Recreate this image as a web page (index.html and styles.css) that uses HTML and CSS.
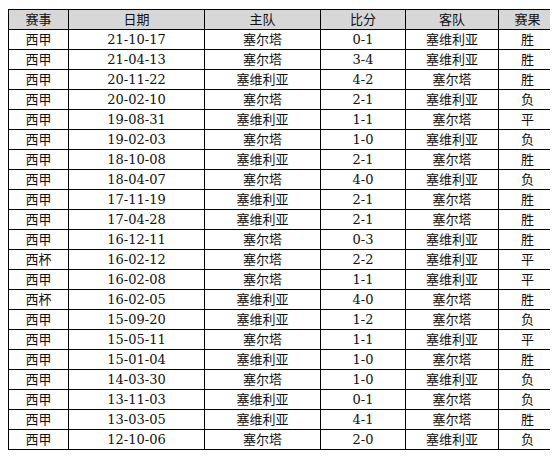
FILE: index.html
```html
<!DOCTYPE html>
<html lang="zh">
<head>
<meta charset="utf-8">
<link rel="stylesheet" href="styles.css">
</head>
<body>
<table class="records">
<colgroup>
<col class="c1"><col class="c2"><col class="c3"><col class="c4"><col class="c5"><col class="c6">
</colgroup>
<thead>
<tr><th>赛事</th><th>日期</th><th>主队</th><th>比分</th><th>客队</th><th>赛果</th></tr>
</thead>
<tbody>
<tr><td>西甲</td><td>21-10-17</td><td>塞尔塔</td><td>0-1</td><td>塞维利亚</td><td>胜</td></tr>
<tr><td>西甲</td><td>21-04-13</td><td>塞尔塔</td><td>3-4</td><td>塞维利亚</td><td>胜</td></tr>
<tr><td>西甲</td><td>20-11-22</td><td>塞维利亚</td><td>4-2</td><td>塞尔塔</td><td>胜</td></tr>
<tr><td>西甲</td><td>20-02-10</td><td>塞尔塔</td><td>2-1</td><td>塞维利亚</td><td>负</td></tr>
<tr><td>西甲</td><td>19-08-31</td><td>塞维利亚</td><td>1-1</td><td>塞尔塔</td><td>平</td></tr>
<tr><td>西甲</td><td>19-02-03</td><td>塞尔塔</td><td>1-0</td><td>塞维利亚</td><td>负</td></tr>
<tr><td>西甲</td><td>18-10-08</td><td>塞维利亚</td><td>2-1</td><td>塞尔塔</td><td>胜</td></tr>
<tr><td>西甲</td><td>18-04-07</td><td>塞尔塔</td><td>4-0</td><td>塞维利亚</td><td>负</td></tr>
<tr><td>西甲</td><td>17-11-19</td><td>塞维利亚</td><td>2-1</td><td>塞尔塔</td><td>胜</td></tr>
<tr><td>西甲</td><td>17-04-28</td><td>塞维利亚</td><td>2-1</td><td>塞尔塔</td><td>胜</td></tr>
<tr><td>西甲</td><td>16-12-11</td><td>塞尔塔</td><td>0-3</td><td>塞维利亚</td><td>胜</td></tr>
<tr><td>西杯</td><td>16-02-12</td><td>塞尔塔</td><td>2-2</td><td>塞维利亚</td><td>平</td></tr>
<tr><td>西甲</td><td>16-02-08</td><td>塞尔塔</td><td>1-1</td><td>塞维利亚</td><td>平</td></tr>
<tr><td>西杯</td><td>16-02-05</td><td>塞维利亚</td><td>4-0</td><td>塞尔塔</td><td>胜</td></tr>
<tr><td>西甲</td><td>15-09-20</td><td>塞维利亚</td><td>1-2</td><td>塞尔塔</td><td>负</td></tr>
<tr><td>西甲</td><td>15-05-11</td><td>塞尔塔</td><td>1-1</td><td>塞维利亚</td><td>平</td></tr>
<tr><td>西甲</td><td>15-01-04</td><td>塞维利亚</td><td>1-0</td><td>塞尔塔</td><td>胜</td></tr>
<tr><td>西甲</td><td>14-03-30</td><td>塞尔塔</td><td>1-0</td><td>塞维利亚</td><td>负</td></tr>
<tr><td>西甲</td><td>13-11-03</td><td>塞维利亚</td><td>0-1</td><td>塞尔塔</td><td>负</td></tr>
<tr><td>西甲</td><td>13-03-05</td><td>塞维利亚</td><td>4-1</td><td>塞尔塔</td><td>胜</td></tr>
<tr><td>西甲</td><td>12-10-06</td><td>塞尔塔</td><td>2-0</td><td>塞维利亚</td><td>负</td></tr>
</tbody>
</table>
</body>
</html>
```
FILE: styles.css
```css
html, body {
  background: #ffffff;
}
body {
  margin: 9px 8px 8px 8px;
  font-family: "DejaVu Serif", "Noto Sans CJK SC", serif;
  font-size: 13px;
  color: #111111;
}
.records {
  border-collapse: collapse;
  table-layout: fixed;
  width: 548px;
}
.c1 { width: 60px; }
.c2 { width: 136px; }
.c3 { width: 116px; }
.c4 { width: 85px; }
.c5 { width: 93px; }
.c6 { width: 58px; }
.records th,
.records td {
  border: 1px solid #000000;
  padding: 0;
  height: 19px;
  line-height: 18px;
  text-align: center;
  font-weight: normal;
  white-space: nowrap;
}
.records th {
  background: #d7d7d7;
}
```
